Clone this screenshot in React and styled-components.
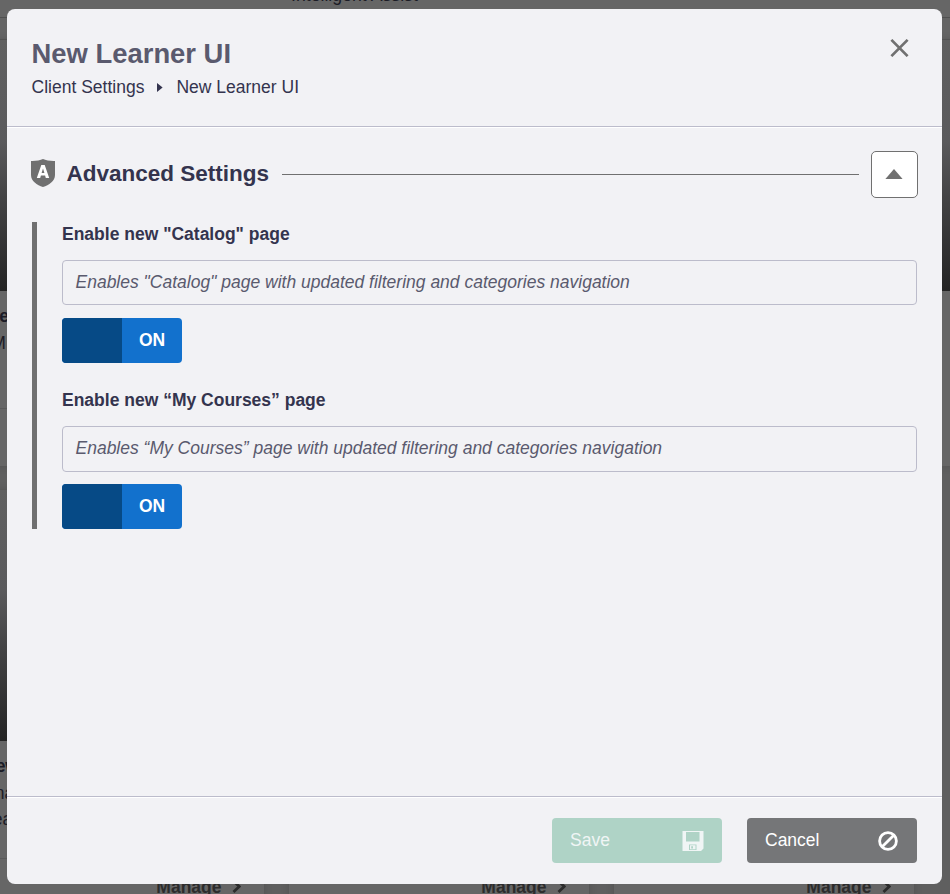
import React, { useState } from "react";
import styled, { createGlobalStyle } from "styled-components";

const GlobalStyle = createGlobalStyle`
    * {
        box-sizing: border-box;
    }
    body {
        margin: 0;
        font-family: "Liberation Sans", Arial, sans-serif;
        font-size: 17.5px;
        color: #34344e;
        overflow: hidden;
    }
    button {
        font: inherit;
        cursor: pointer;
    }
`;

const Screen = styled.div`
    position: relative;
    width: 950px;
    height: 894px;
    overflow: hidden;
    background: #5f5f5f;
`;

/* dimmed page behind the dialog */
const Page = styled.div`
    height: 100%;
    color: #1c1c26;
`;

const TopBar = styled.div`
    display: flex;
    align-items: flex-start;
    height: 18px;
    background: #666666;
    border-bottom: 1px solid #505050;
    padding-left: 291px;
    line-height: 20px;
`;

const TopLabel = styled.div`
    margin-top: -15px;
    white-space: nowrap;
    font-size: 17.7px;
`;

const SubBar = styled.div`
    height: 22px;
    background: #646464;
    border-bottom: 1px solid #585858;
`;

const Cards = styled.div`
    display: grid;
    grid-template-columns: repeat(4, 300px);
    column-gap: 25px;
    row-gap: 24px;
    margin-left: -36px;
    width: 1275px;
`;

const Card = styled.div`
    height: ${({ $tall }) => ($tall ? 450 : 426)}px;
    background: #666666;
    box-shadow: 0 0 8px rgba(0, 0, 0, 0.15);
`;

const CardImage = styled.div`
    height: 251px;
    background: linear-gradient(#606060, #5a5a5c 40%, #444445 62%, #242424);
`;

const CardBody = styled.div`
    height: 118px;
    padding: 12px 0 0 ${({ $indent }) => $indent}px;
    line-height: 26.5px;
    border-bottom: 1px solid #5a5a5a;
    white-space: nowrap;
`;

const CardTitle = styled.div`
    font-weight: bold;
`;

const CardFooter = styled.div`
    display: flex;
    justify-content: flex-end;
    align-items: center;
    gap: 10px;
    height: 56px;
    padding-right: 23.5px;
    font-weight: bold;
    color: #2c2c2c;
`;

const Dialog = styled.div`
    position: absolute;
    top: 9px;
    left: 7px;
    width: 935px;
    height: 875px;
    border-radius: 8px;
    background: #f2f2f5;
    display: flex;
    flex-direction: column;
`;

const Header = styled.div`
    height: 118px;
    padding: 28px 25px 0 24.6px;
    display: flex;
    justify-content: space-between;
    align-items: flex-start;
    border-bottom: 1px solid #bcbccb;
    box-shadow: 0 1px 0 #ffffff;
`;

const Title = styled.h1`
    margin: 0;
    font-size: 27.4px;
    line-height: 34px;
    color: #5a5a6e;
`;

const Crumbs = styled.div`
    display: flex;
    align-items: center;
    line-height: 22px;
    margin-top: 5px;

    svg {
        margin: 0 13px;
    }
`;

const CloseButton = styled.button`
    border: 0;
    padding: 0;
    margin: 2px 8px 0 0;
    background: none;
    display: flex;
`;

const Content = styled.div`
    flex: 1;
    padding: 24px 24px 0;
`;

const SectionHead = styled.div`
    display: flex;
    align-items: center;
    height: 47px;
`;

const ShieldIcon = styled.svg`
    margin-top: -3px;
`;

const SectionTitle = styled.h2`
    margin: 0 13px 2px 11.4px;
    font-size: 22.5px;
    line-height: 28px;
`;

const Rule = styled.div`
    flex: 1;
    height: 1px;
    background: #707070;
    margin-right: 12px;
`;

const Collapse = styled.button`
    width: 47px;
    height: 47px;
    padding: 0 1px 2px 0;
    border: 1px solid #707070;
    border-radius: 5px;
    background: #ffffff;
    display: flex;
    align-items: center;
    justify-content: center;
`;

const Settings = styled.div`
    margin: 24px 1px 0;
    padding-left: 25px;
    border-left: 5px solid #707070;
`;

const Setting = styled.div`
    & + & {
        margin-top: 25px;
    }
`;

const Label = styled.div`
    font-weight: bold;
    line-height: 24px;
    height: 38px;
`;

const Description = styled.div`
    height: ${({ $height }) => $height}px;
    padding-left: 12.5px;
    border: 1px solid #bcbccb;
    border-radius: 4px;
    line-height: 42px;
    font-style: italic;
    color: #5a5a6e;
`;

const Toggle = styled.button`
    display: flex;
    width: 120px;
    height: 45px;
    margin-top: ${({ $gap }) => $gap}px;
    padding: 0;
    border: 0;
    border-radius: 4px;
    overflow: hidden;
    background: ${({ $on }) => ($on ? "#1271cd" : "#707070")};
    flex-direction: ${({ $on }) => ($on ? "row" : "row-reverse")};
`;

const Knob = styled.span`
    width: 60px;
    height: 45px;
    background: #064a86;
`;

const ToggleText = styled.span`
    width: 60px;
    line-height: 44px;
    font-weight: bold;
    color: #ffffff;
    text-align: center;
`;

const Footer = styled.div`
    height: 88px;
    padding: 21px 25px 0;
    display: flex;
    justify-content: flex-end;
    gap: 25px;
    border-top: 1px solid #bcbccb;
    box-shadow: inset 0 1px 0 #ffffff;
`;

const ActionButton = styled.button`
    display: flex;
    align-items: center;
    justify-content: space-between;
    width: 170px;
    height: 45px;
    padding: 0 18px;
    border: 0;
    border-radius: 4px;
    background: ${({ $save }) => ($save ? "#afd3c6" : "#757678")};
    color: ${({ $save }) => ($save ? "#f0f5f5" : "#ffffff")};

    span {
        line-height: 20px;
        margin-bottom: 2px;
    }
`;

const settings = [
    {
        label: 'Enable new "Catalog" page',
        text: 'Enables "Catalog" page with updated filtering and categories navigation',
        height: 45,
        gap: 13,
    },
    {
        label: "Enable new “My Courses” page",
        text: "Enables “My Courses” page with updated filtering and categories navigation",
        height: 46,
        gap: 12,
    },
];

function Manage() {
    return (
        <CardFooter>
            Manage
            <svg width="9" height="14" viewBox="0 0 9 14" fill="none" stroke="#2c2c2c" strokeWidth="2.8">
                <path d="M1.5 1L7.2 6.5L1.5 12" />
            </svg>
        </CardFooter>
    );
}

function Background() {
    return (
        <Page>
            <TopBar>
                <TopLabel>Intelligent Assist</TopLabel>
            </TopBar>
            <SubBar />
            <Cards>
                <Card>
                    <CardImage />
                    <CardBody $indent={22.5}>
                        <CardTitle>New</CardTitle>
                        <div>&nbsp;M</div>
                    </CardBody>
                </Card>
                <Card />
                <Card />
                <Card>
                    <CardImage />
                </Card>
                {[0, 1, 2].map((i) => (
                    <Card key={i} $tall>
                        <CardImage />
                        <CardBody $indent={19}>
                            <CardTitle>New</CardTitle>
                            <div>Ena</div>
                            <div>Lea</div>
                        </CardBody>
                        <Manage />
                    </Card>
                ))}
            </Cards>
        </Page>
    );
}

function SettingItem({ item }) {
    const [on, setOn] = useState(true);

    return (
        <Setting>
            <Label>{item.label}</Label>
            <Description $height={item.height}>{item.text}</Description>
            <Toggle $on={on} $gap={item.gap} onClick={() => setOn(!on)}>
                <Knob />
                <ToggleText>{on ? "ON" : "OFF"}</ToggleText>
            </Toggle>
        </Setting>
    );
}

function App() {
    const [open, setOpen] = useState(true);

    return (
        <Screen>
            <GlobalStyle />
            <Background />
            <Dialog>
                <Header>
                    <div>
                        <Title>New Learner UI</Title>
                        <Crumbs>
                            Client Settings
                            <svg width="6" height="9" viewBox="0 0 6 9">
                                <path d="M0 0L5.6 4.5L0 9Z" fill="#34344e" />
                            </svg>
                            New Learner UI
                        </Crumbs>
                    </div>
                    <CloseButton aria-label="Close">
                        <svg width="19" height="18" viewBox="0 0 19 18" stroke="#707070" strokeWidth="2.7">
                            <path d="M1.4 0.9L17.6 17.1M17.6 0.9L1.4 17.1" />
                        </svg>
                    </CloseButton>
                </Header>
                <Content>
                    <SectionHead>
                        <ShieldIcon width="24" height="28" viewBox="0 0 24 28">
                            <path d="M12 0C9.3 1.4 4.2 2.1 0 1.9V16C0 22 6 26 12 28C18 26 24 22 24 16V1.9C19.8 2.1 14.7 1.4 12 0Z" fill="#707070" />
                            <path fillRule="evenodd" d="M5.8 19L10.3 6H13.7L18.2 19H14.8L14.1 16.6H9.9L9.2 19ZM10.6 14.1H13.4L12 9.4Z" fill="#ffffff" />
                        </ShieldIcon>
                        <SectionTitle>Advanced Settings</SectionTitle>
                        <Rule />
                        <Collapse aria-label="Toggle section" onClick={() => setOpen(!open)}>
                            <svg width="18" height="10" viewBox="0 0 18 10">
                                <path d="M9 0L17.6 10H0.4Z" fill="#707070" />
                            </svg>
                        </Collapse>
                    </SectionHead>
                    {open && (
                        <Settings>
                            {settings.map((item) => (
                                <SettingItem key={item.label} item={item} />
                            ))}
                        </Settings>
                    )}
                </Content>
                <Footer>
                    <ActionButton $save>
                        <span>Save</span>
                        <svg width="22" height="20" viewBox="0 0 22 20">
                            <path fillRule="evenodd" fill="#f0f5f5" d="M0.5 0H21.5V17.5L19 20H0.5ZM4 1V10.5H17.5V1ZM7 13.5V19H14.5V13.5Z" />
                            <path fillRule="evenodd" fill="#f0f5f5" d="M8 14.2H13.5V18.2H8ZM9.2 15.2V17.4H11V15.2Z" />
                        </svg>
                    </ActionButton>
                    <ActionButton>
                        <span>Cancel</span>
                        <svg width="22" height="20" viewBox="0 0 22 20" fill="none" stroke="#ffffff" strokeWidth="2.8">
                            <circle cx="11" cy="10" r="8.4" />
                            <path d="M5.2 15.8L16.8 4.2" />
                        </svg>
                    </ActionButton>
                </Footer>
            </Dialog>
        </Screen>
    );
}

export default App;
